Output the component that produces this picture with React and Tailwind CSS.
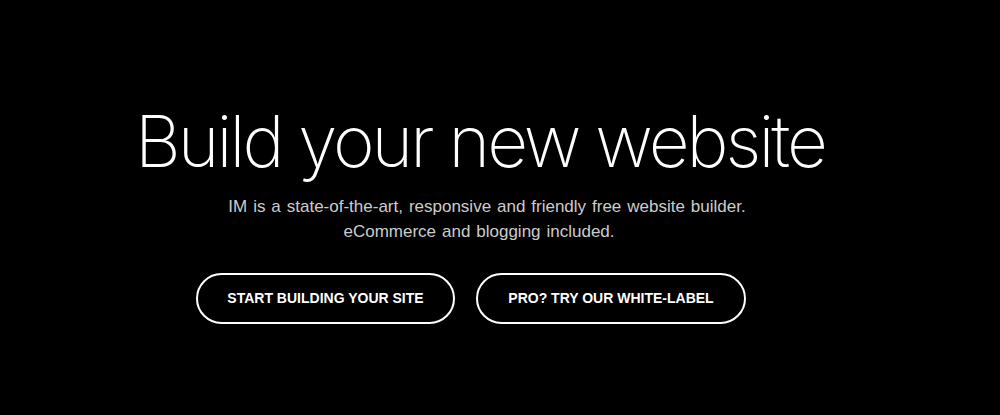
export default function App() {
  return (
    <div className="min-h-screen w-full bg-black flex flex-col items-center pr-[40px] pt-[105px]" style={{ minHeight: 415 }}>
      <h1 className="text-white text-[71px] leading-[72px] font-extralight font-['Inter',sans-serif] tracking-[-3px]">
        Build your new website
      </h1>
      <p className="mt-[17px] pl-[14px] text-[#cccccc] text-[17px] leading-[25px] [word-spacing:1.2px] text-center font-['Liberation_Sans',Arial,sans-serif]">
        <span className="block">IM is a state-of-the-art, responsive and friendly free website builder.</span>
        <span className="block pr-[16px]">eCommerce and blogging included.</span>
      </p>
      <div className="mt-[29px] flex gap-[21px] pr-[18px] font-['Liberation_Sans',Arial,sans-serif]">
        <a href="#" className="h-[51px] w-[259px] border-2 border-white rounded-full flex items-center justify-center text-white text-[14px] font-bold">
          START BUILDING YOUR SITE
        </a>
        <a href="#" className="h-[51px] w-[270px] border-2 border-white rounded-full flex items-center justify-center text-white text-[14px] font-bold">
          PRO? TRY OUR WHITE-LABEL
        </a>
      </div>
    </div>
  );
}
